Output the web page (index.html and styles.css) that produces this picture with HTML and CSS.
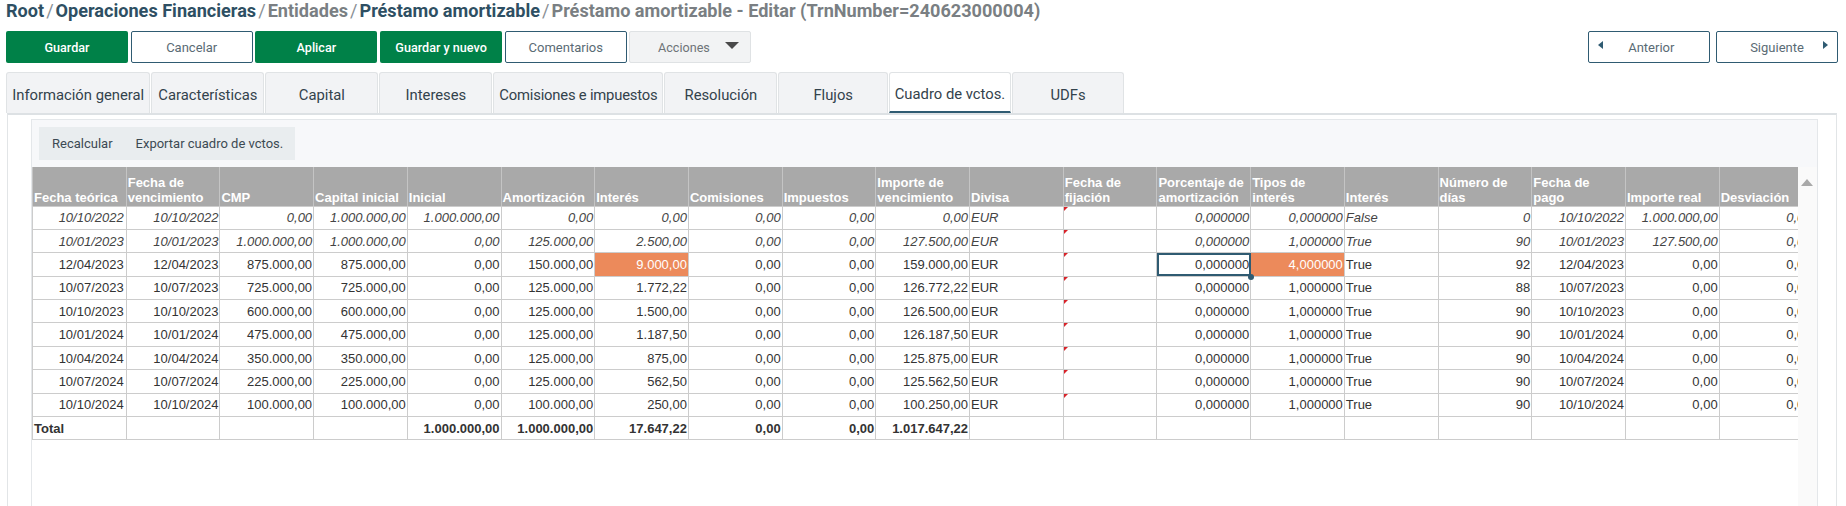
FILE: index.html
```html
<!DOCTYPE html>
<html lang="es">
<head>
<meta charset="utf-8">
<title>Préstamo amortizable - Editar</title>
<link rel="stylesheet" href="styles.css">
</head>
<body>
<div class="page">
  <nav class="crumbs"><a class="on">Root</a><i>/</i><a class="on">Operaciones Financieras</a><i>/</i><a>Entidades</a><i>/</i><a class="on">Préstamo amortizable</a><i>/</i><a>Préstamo amortizable - Editar (TrnNumber=240623000004)</a></nav>
  <div class="actions">
    <button class="btn primary">Guardar</button>
    <button class="btn outline">Cancelar</button>
    <button class="btn primary">Aplicar</button>
    <button class="btn primary">Guardar y nuevo</button>
    <button class="btn outline">Comentarios</button>
    <button class="btn muted">Acciones<span class="caret"></span></button>
    <span class="spring"></span>
    <button class="btn outline prev"><span class="tri left"></span>Anterior</button>
    <button class="btn outline next">Siguiente<span class="tri right"></span></button>
  </div>
  <div class="tabs">
    <div class="tab w144">Información general</div>
    <div class="tab w113">Características</div>
    <div class="tab w113">Capital</div>
    <div class="tab w113">Intereses</div>
    <div class="tab w170">Comisiones e impuestos</div>
    <div class="tab w113">Resolución</div>
    <div class="tab w109">Flujos</div>
    <div class="tab w122 active">Cuadro de vctos.</div>
    <div class="tab w112">UDFs</div>
  </div>
  <div class="frame">
    <div class="panel">
      <div class="tools"><span class="tool">Recalcular</span><span class="tool">Exportar cuadro de vctos.</span></div>
      <div class="gridrow">
        <div class="gridclip">
          <table class="grid">
            <thead>
              <tr><th>Fecha teórica</th><th>Fecha de vencimiento</th><th>CMP</th><th>Capital inicial</th><th>Inicial</th><th>Amortización</th><th>Interés</th><th>Comisiones</th><th>Impuestos</th><th>Importe de vencimiento</th><th>Divisa</th><th>Fecha de fijación</th><th>Porcentaje de amortización</th><th>Tipos de interés</th><th>Interés</th><th>Número de días</th><th>Fecha de pago</th><th>Importe real</th><th>Desviación</th></tr>
            </thead>
            <tbody>
              <tr class="past"><td>10/10/2022</td><td>10/10/2022</td><td>0,00</td><td>1.000.000,00</td><td>1.000.000,00</td><td>0,00</td><td>0,00</td><td>0,00</td><td>0,00</td><td>0,00</td><td class="l">EUR</td><td class="fix"></td><td>0,000000</td><td>0,000000</td><td class="l">False</td><td>0</td><td>10/10/2022</td><td>1.000.000,00</td><td>0,00</td></tr>
              <tr class="past"><td>10/01/2023</td><td>10/01/2023</td><td>1.000.000,00</td><td>1.000.000,00</td><td>0,00</td><td>125.000,00</td><td>2.500,00</td><td>0,00</td><td>0,00</td><td>127.500,00</td><td class="l">EUR</td><td class="fix"></td><td>0,000000</td><td>1,000000</td><td class="l">True</td><td>90</td><td>10/01/2023</td><td>127.500,00</td><td>0,00</td></tr>
              <tr><td>12/04/2023</td><td>12/04/2023</td><td>875.000,00</td><td>875.000,00</td><td>0,00</td><td>150.000,00</td><td class="hot">9.000,00</td><td>0,00</td><td>0,00</td><td>159.000,00</td><td class="l">EUR</td><td class="fix"></td><td class="sel">0,000000<span class="handle"></span></td><td class="hot">4,000000</td><td class="l">True</td><td>92</td><td>12/04/2023</td><td>0,00</td><td>0,00</td></tr>
              <tr><td>10/07/2023</td><td>10/07/2023</td><td>725.000,00</td><td>725.000,00</td><td>0,00</td><td>125.000,00</td><td>1.772,22</td><td>0,00</td><td>0,00</td><td>126.772,22</td><td class="l">EUR</td><td class="fix"></td><td>0,000000</td><td>1,000000</td><td class="l">True</td><td>88</td><td>10/07/2023</td><td>0,00</td><td>0,00</td></tr>
              <tr><td>10/10/2023</td><td>10/10/2023</td><td>600.000,00</td><td>600.000,00</td><td>0,00</td><td>125.000,00</td><td>1.500,00</td><td>0,00</td><td>0,00</td><td>126.500,00</td><td class="l">EUR</td><td class="fix"></td><td>0,000000</td><td>1,000000</td><td class="l">True</td><td>90</td><td>10/10/2023</td><td>0,00</td><td>0,00</td></tr>
              <tr><td>10/01/2024</td><td>10/01/2024</td><td>475.000,00</td><td>475.000,00</td><td>0,00</td><td>125.000,00</td><td>1.187,50</td><td>0,00</td><td>0,00</td><td>126.187,50</td><td class="l">EUR</td><td class="fix"></td><td>0,000000</td><td>1,000000</td><td class="l">True</td><td>90</td><td>10/01/2024</td><td>0,00</td><td>0,00</td></tr>
              <tr><td>10/04/2024</td><td>10/04/2024</td><td>350.000,00</td><td>350.000,00</td><td>0,00</td><td>125.000,00</td><td>875,00</td><td>0,00</td><td>0,00</td><td>125.875,00</td><td class="l">EUR</td><td class="fix"></td><td>0,000000</td><td>1,000000</td><td class="l">True</td><td>90</td><td>10/04/2024</td><td>0,00</td><td>0,00</td></tr>
              <tr><td>10/07/2024</td><td>10/07/2024</td><td>225.000,00</td><td>225.000,00</td><td>0,00</td><td>125.000,00</td><td>562,50</td><td>0,00</td><td>0,00</td><td>125.562,50</td><td class="l">EUR</td><td class="fix"></td><td>0,000000</td><td>1,000000</td><td class="l">True</td><td>90</td><td>10/07/2024</td><td>0,00</td><td>0,00</td></tr>
              <tr><td>10/10/2024</td><td>10/10/2024</td><td>100.000,00</td><td>100.000,00</td><td>0,00</td><td>100.000,00</td><td>250,00</td><td>0,00</td><td>0,00</td><td>100.250,00</td><td class="l">EUR</td><td class="fix"></td><td>0,000000</td><td>1,000000</td><td class="l">True</td><td>90</td><td>10/10/2024</td><td>0,00</td><td>0,00</td></tr>
              <tr class="total"><td class="l">Total</td><td></td><td></td><td></td><td>1.000.000,00</td><td>1.000.000,00</td><td>17.647,22</td><td>0,00</td><td>0,00</td><td>1.017.647,22</td><td></td><td></td><td></td><td></td><td></td><td></td><td></td><td></td><td></td></tr>
            </tbody>
          </table>
        </div>
        <div class="scroll"><span class="up"></span></div>
      </div>
    </div>
  </div>
</div>
</body>
</html>
```
FILE: styles.css
```css
* { box-sizing: border-box; }
html, body { margin: 0; height: 100%; background: #fff; overflow: hidden; }
.page { height: 506px; overflow: hidden; padding: 0 9px 0 6px; font-family: Roboto, "Liberation Sans", sans-serif; }

.crumbs { height: 21px; padding-top: 1px; font-size: 18.1px; line-height: 20px; font-weight: 700; color: #7a7f83; white-space: nowrap; }
.crumbs a.on { color: #2e4f63; }
.crumbs i { font-weight: 400; font-style: normal; color: #8a9095; margin: 0 2px; }

.actions { display: flex; gap: 2.7px; margin: 10px -1px 0 0; height: 32px; }
.spring { flex: 1; }
.btn { width: 122px; height: 32px; padding: 0; border-radius: 2px; font-family: Roboto, sans-serif; font-size: 13px; display: flex; align-items: center; justify-content: center; border: 1px solid transparent; }
.primary { background: #008148; color: #fff; font-size: 12.6px; font-weight: 500; }
.outline { background: #fff; border-color: #2f5b72; color: #5a6b75; }
.muted { background: #f2f3f4; border-color: #dfe2e4; color: #6e7478; gap: 15px; padding-left: 16px; font-size: 12.6px; }
.caret { width: 0; height: 0; border-left: 7.5px solid transparent; border-right: 7.5px solid transparent; border-top: 7px solid #4a4a4a; margin-top: -3px; }
.prev { position: relative; padding-left: 4px; }
.next { position: relative; margin-left: 3px; }
.tri { position: absolute; top: 9px; width: 0; height: 0; border-top: 4px solid transparent; border-bottom: 4px solid transparent; }
.tri.left { left: 9px; border-right: 5px solid #2f5b72; }
.tri.right { right: 9px; border-left: 5px solid #2f5b72; }

.tabs { display: flex; gap: 1px; margin-top: 9px; height: 41px; }
.tab { height: 41px; padding-top: 3px; display: flex; align-items: center; justify-content: center; background: #f2f3f5; border: 1px solid #e0e3e5; border-bottom: 0; border-radius: 3px 3px 0 0; font-size: 14.8px; color: #33424c; white-space: nowrap; }
.tab.active { background: #fff; border-bottom: 2px solid #2f5b72; }
.w144 { width: 144.4px; } .w113 { width: 113px; } .w170 { width: 170px; letter-spacing: -0.2px; } .w109 { width: 109.6px; } .w122 { width: 122px; } .w112 { width: 112px; }

.frame { margin-left: 1px; height: 400px; border: 1px solid #e2e5e7; border-top: 2px solid #dde1e4; padding: 4px 18px 0 23px; }
.panel { height: 390px; background: linear-gradient(#f7f8fa 0 48px, #fff 48px); border: 1px solid #e4e7ea; border-bottom: 0; }
.tools { display: flex; margin: 7px 0 0 7px; width: 256px; height: 33px; background: #e9edef; align-items: center; font-size: 13px; color: #3c4a53; }
.tool { padding: 0 12px 0 13px; white-space: nowrap; }
.tool + .tool { padding-left: 11px; }

.gridrow { display: flex; margin-top: 7px; height: 340px; }
.gridclip { width: 1766px; overflow: hidden; flex: none; }
.scroll { flex: 1; background: #fafafa; padding: 12px 0 0 3px; }
.up { display: block; width: 0; height: 0; border-left: 6.5px solid transparent; border-right: 6.5px solid transparent; border-bottom: 7px solid #a9a9a9; }

.grid { width: 1781.5px; table-layout: fixed; border-collapse: collapse; font-family: "Liberation Sans", Arial, sans-serif; font-size: 13px; color: #333; background: #fff; }
.grid th { height: 39px; padding: 0 1px 1px; background: #a9a9a9; color: #fff; font-weight: 700; font-size: 13px; line-height: 15px; text-align: left; vertical-align: bottom; border: 1px solid #c4c4c4; border-top: 0; border-bottom-color: #ccc; }
.grid td { height: 23.4px; padding: 0 1px; text-align: right; border: 1px solid #ccc; white-space: nowrap; overflow: hidden; position: relative; }
.grid td:first-child { padding-right: 2px; }
.grid td.l { text-align: left; }
.past td { font-style: italic; color: #444; }
.total td { font-weight: 700; }
.grid td.hot { background: #ec8a5b; color: #fff; font-weight: 400; }
.grid td.sel { overflow: visible; outline: 2px solid #2f5b72; outline-offset: -2px; z-index: 1; }
.handle { position: absolute; right: -4px; bottom: -4px; width: 6px; height: 6px; border-radius: 50%; background: #2f5b72; }
.fix::before { content: ""; position: absolute; top: 0; left: 0; width: 0; height: 0; border-top: 4px solid #d8232a; border-right: 4px solid transparent; }
```
